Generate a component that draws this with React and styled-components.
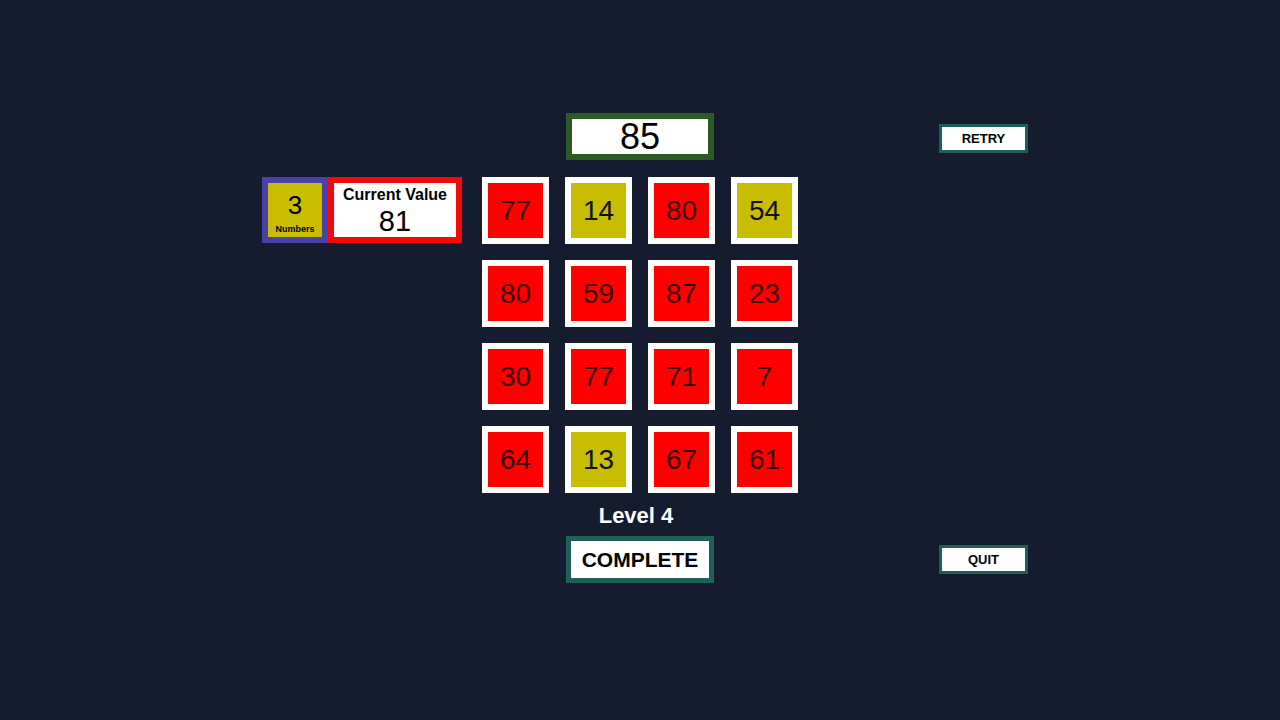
import React from 'react';
import styled, { createGlobalStyle } from 'styled-components';

const GlobalStyle = createGlobalStyle`
  html, body {
    margin: 0;
    padding: 0;
    background: #151c30;
  }
  body {
    font-family: "Liberation Sans", Arial, sans-serif;
  }
`

const Page = styled.div`
  width: 1280px;
  height: 720px;
  background: #151c30;
  box-sizing: border-box;
  padding: 113px 0 0 262px;
  display: flex;
  align-items: flex-start;
`

const LeftPanel = styled.div`
  display: flex;
  margin-top: 64px;
  margin-right: 20px;
`

const CountBox = styled.div`
  width: 66px;
  height: 66px;
  box-sizing: border-box;
  border: 6px solid #4b40a8;
  background: #c8bd00;
  display: flex;
  flex-direction: column;
  align-items: center;
  color: #000;
`

const CountValue = styled.div`
  font-size: 26px;
  line-height: 28px;
  margin-top: 8px;
`

const CountLabel = styled.div`
  font-size: 9px;
  font-weight: bold;
  margin-top: 5px;
`

const ValueBox = styled.div`
  width: 134px;
  height: 66px;
  box-sizing: border-box;
  border: 6px solid #f20a0a;
  background: #fff;
  display: flex;
  flex-direction: column;
  align-items: center;
  color: #000;
`

const ValueTitle = styled.div`
  font-size: 16px;
  font-weight: bold;
  line-height: 18px;
  margin-top: 3px;
`

const ValueNumber = styled.div`
  font-size: 29px;
  line-height: 30px;
  margin-top: 2px;
`

const Center = styled.div`
  width: 316px;
  display: flex;
  flex-direction: column;
  align-items: center;
`

const TargetBox = styled.div`
  width: 148px;
  height: 47px;
  box-sizing: border-box;
  border: 6px solid #2c5a25;
  background: #fff;
  display: flex;
  align-items: center;
  justify-content: center;
  font-size: 36px;
  color: #000;
`

const Board = styled.div`
  margin-top: 17px;
  display: grid;
  grid-template-columns: repeat(4, 67px);
  grid-auto-rows: 67px;
  gap: 16px;
`

const Tile = styled.div`
  box-sizing: border-box;
  border: 6px solid #fff;
  background: ${props => props.$picked ? '#c8bd00' : '#ff0000'};
  color: ${props => props.$picked ? '#111' : '#3a0000'};
  display: flex;
  align-items: center;
  justify-content: center;
  font-size: 28px;
  padding-top: 1px;
`

const LevelLabel = styled.div`
  margin: 10px 8px 0 0;
  font-size: 22px;
  font-weight: bold;
  line-height: 26px;
  color: #fff;
`

const CompleteButton = styled.div`
  margin-top: 7px;
  width: 148px;
  height: 47px;
  box-sizing: border-box;
  border: 5px solid #1f5f5a;
  background: #fff;
  display: flex;
  align-items: center;
  justify-content: center;
  font-size: 21px;
  font-weight: bold;
  color: #000;
`

const RightColumn = styled.div`
  margin-left: 141px;
  height: 461px;
  display: flex;
  flex-direction: column;
  justify-content: space-between;
  padding-top: 11px;
  box-sizing: border-box;
`

const SmallButton = styled.div`
  width: 89px;
  height: 29px;
  box-sizing: border-box;
  border: 3px solid #1f5f5a;
  background: #fff;
  display: flex;
  align-items: center;
  justify-content: center;
  font-size: 13px;
  font-weight: bold;
  color: #000;
`

const tiles = [
  [77, false], [14, true], [80, false], [54, true],
  [80, false], [59, false], [87, false], [23, false],
  [30, false], [77, false], [71, false], [7, false],
  [64, false], [13, true], [67, false], [61, false],
];

export default function App() {
  return (
    <>
      <GlobalStyle />
      <Page>
        <LeftPanel>
          <CountBox>
            <CountValue>3</CountValue>
            <CountLabel>Numbers</CountLabel>
          </CountBox>
          <ValueBox>
            <ValueTitle>Current Value</ValueTitle>
            <ValueNumber>81</ValueNumber>
          </ValueBox>
        </LeftPanel>
        <Center>
          <TargetBox>85</TargetBox>
          <Board>
            {tiles.map(([n, picked], i) => (
              <Tile key={i} $picked={picked}>{n}</Tile>
            ))}
          </Board>
          <LevelLabel>Level 4</LevelLabel>
          <CompleteButton>COMPLETE</CompleteButton>
        </Center>
        <RightColumn>
          <SmallButton>RETRY</SmallButton>
          <SmallButton>QUIT</SmallButton>
        </RightColumn>
      </Page>
    </>
  );
}
